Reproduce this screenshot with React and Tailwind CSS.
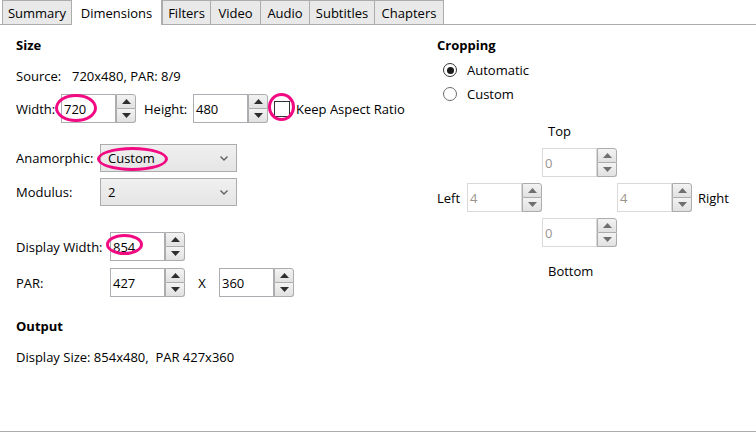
import React from "react";

function Up({ c = "#3a3a3a" }) {
  return (
    <svg width="9" height="5" viewBox="0 0 9 5"><polygon points="0,5 9,5 4.5,0" fill={c} /></svg>
  );
}
function Down({ c = "#3a3a3a" }) {
  return (
    <svg width="9" height="5" viewBox="0 0 9 5"><polygon points="0,0 9,0 4.5,5" fill={c} /></svg>
  );
}

function Spinner({ disabled }) {
  const c = disabled ? "#6f6f6f" : "#2e2e2e";
  return (
    <div className="flex flex-col w-[20px] h-full">
      <div className="flex-1 flex items-center justify-center border border-[#acacac] rounded-tr-[3px] bg-gradient-to-b from-[#f3f3f3] to-[#e1e1e1]">
        <Up c={c} />
      </div>
      <div className="flex-1 flex items-center justify-center border border-t-0 border-[#acacac] rounded-br-[3px] bg-gradient-to-b from-[#f3f3f3] to-[#e1e1e1]">
        <Down c={c} />
      </div>
    </div>
  );
}

function NumberBox({ value, disabled }) {
  return (
    <div className="flex h-[29px] w-[75px]">
      <div
        className={
          disabled
            ? "w-[55px] h-full border border-[#d9d9d9] bg-white pl-[2px] flex items-center text-[#9a948f]"
            : "w-[55px] h-full border border-[#abadb3] bg-white pl-[2px] flex items-center text-black"
        }
      >
        {value}
      </div>
      <Spinner disabled={disabled} />
    </div>
  );
}

function Select({ value }) {
  return (
    <div className="w-[137px] h-[28px] border border-[#acacac] bg-gradient-to-b from-[#f0f0f0] to-[#e5e5e5] flex items-center justify-between pl-[7px] pr-[8px]">
      <span>{value}</span>
      <svg width="8" height="5" viewBox="0 0 8 5">
        <polyline points="0.5,0.5 4,4 7.5,0.5" fill="none" stroke="#606060" strokeWidth="1.4" />
      </svg>
    </div>
  );
}

function Radio({ checked }) {
  return (
    <div
      className={
        checked
          ? "w-[14px] h-[14px] rounded-full border border-[#333333] bg-white flex items-center justify-center"
          : "w-[14px] h-[14px] rounded-full border border-[#6e6e6e] bg-white"
      }
    >
      {checked && <div className="w-[7px] h-[7px] rounded-full bg-[#1a1a1a]" />}
    </div>
  );
}

const tabs = [
  { name: "Summary", w: "w-[70px]" },
  { name: "Dimensions", w: "w-[90px]", sel: true },
  { name: "Filters", w: "w-[49px]" },
  { name: "Video", w: "w-[51px]" },
  { name: "Audio", w: "w-[50px]" },
  { name: "Subtitles", w: "w-[66px]" },
  { name: "Chapters", w: "w-[70px]" },
];

export default function App() {
  return (
    <div className="relative w-[756px] h-[432px] bg-white text-[13px] leading-[16px] text-black font-['Segoe_UI','Open_Sans',sans-serif] overflow-hidden">
      {/* tab strip */}
      <div className="flex h-[25px] pl-[2px] border-b border-[#acacac]">
        {tabs.map((t) => (
          <div
            key={t.name}
            className={
              t.sel
                ? t.w + " h-[25px] bg-white flex items-center justify-center border-r border-[#acacac]"
                : t.w + " h-[24px] bg-[#e9e9e9] flex items-center justify-center border-t border-l border-r border-[#acacac] -mr-px first:mr-0"
            }
          >
            {t.name}
          </div>
        ))}
      </div>

      {/* panel */}
      <div className="flex h-[407px] border-b border-[#acacac] pl-[16px]">
        {/* left column */}
        <div className="w-[421px] flex flex-col">
          <div className="mt-[12px] font-bold">Size</div>
          <div className="mt-[15px] flex">
            <span className="w-[56px]">Source:</span>
            <span>720x480, PAR: 8/9</span>
          </div>
          <div className="mt-[10px] flex items-center h-[29px]">
            <span className="w-[45px]">Width:</span>
            <NumberBox value="720" />
            <span className="ml-[8px] w-[49px]">Height:</span>
            <NumberBox value="480" />
            <div className="ml-[6px] w-[16px] h-[16px] border border-[#333333] bg-white" />
            <span className="ml-[6px]">Keep Aspect Ratio</span>
          </div>
          <div className="mt-[21px] flex items-center">
            <span className="w-[84px]">Anamorphic:</span>
            <Select value="Custom" />
          </div>
          <div className="mt-[6px] flex items-center">
            <span className="w-[84px]">Modulus:</span>
            <Select value="2" />
          </div>
          <div className="mt-[26px] flex items-center">
            <span className="w-[94px]">Display Width:</span>
            <NumberBox value="854" />
          </div>
          <div className="mt-[7px] flex items-center">
            <span className="w-[94px]">PAR:</span>
            <NumberBox value="427" />
            <span className="w-[34px] text-center">X</span>
            <NumberBox value="360" />
          </div>
          <div className="mt-[21px] font-bold">Output</div>
          <div className="mt-[15px] whitespace-pre">Display Size: 854x480,  PAR 427x360</div>
        </div>

        {/* right column */}
        <div className="flex flex-col">
          <div className="mt-[12px] font-bold">Cropping</div>
          <div className="mt-[9px] flex items-center pl-[6px] gap-[10px]">
            <Radio checked />
            <span>Automatic</span>
          </div>
          <div className="mt-[8px] flex items-center pl-[6px] gap-[10px]">
            <Radio />
            <span>Custom</span>
          </div>
          <div className="mt-[21px] pl-[111px]">Top</div>
          <div className="mt-[9px] grid grid-cols-[30px_75px_75px_75px_auto] grid-rows-[29px_29px_29px] gap-y-[6px]">
            <div />
            <div />
            <NumberBox value="0" disabled />
            <div />
            <div />
            <div className="flex items-center">Left</div>
            <NumberBox value="4" disabled />
            <div />
            <NumberBox value="4" disabled />
            <div className="flex items-center pl-[6px]">Right</div>
            <div />
            <div />
            <NumberBox value="0" disabled />
            <div />
            <div />
          </div>
          <div className="mt-[16px] pl-[111px]">Bottom</div>
        </div>
      </div>

      {/* annotation ellipses */}
      <div className="absolute left-[55px] top-[94px] w-[42px] h-[28px] rounded-[50%] border-[3px] border-[#f20a82]" />
      <div className="absolute left-[268px] top-[93px] w-[27px] h-[28px] rounded-[50%] border-[3px] border-[#f20a82]" />
      <div className="absolute left-[97px] top-[147px] w-[71px] h-[24px] rounded-[50%] border-[3px] border-[#f20a82]" />
      <div className="absolute left-[106px] top-[234px] w-[37px] h-[21px] rounded-[50%] border-[3px] border-[#f20a82]" />
    </div>
  );
}
